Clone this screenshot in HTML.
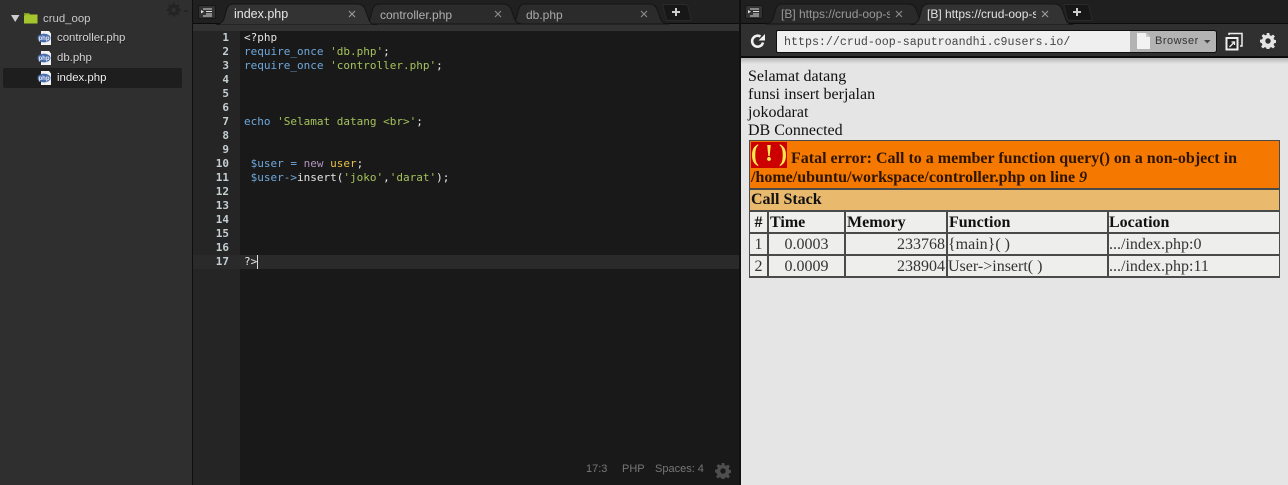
<!DOCTYPE html>
<html><head><meta charset="utf-8">
<style>
*{box-sizing:border-box}
html,body{margin:0;padding:0;width:1288px;height:485px;overflow:hidden;background:#1a1a1a}
.a{position:absolute}
.s{font-family:"Liberation Sans",sans-serif;white-space:nowrap}
.m{font-family:"DejaVu Sans Mono","Liberation Mono",monospace;white-space:pre}
.f{font-size:11.4px;color:#d5d5d5;left:57px;text-shadow:0 1px 0 #111;line-height:14px}
.fi{left:37px;width:16px;height:14px}
.ln{left:193px;width:36px;text-align:right;color:#c4ced3;font-size:11px;line-height:14px;font-weight:bold;height:14px}
.cd{left:244px;font-size:11px;line-height:14px;height:14px;color:#e6e6e6}
.b{color:#6fa8dc}.g{color:#a5c25c}.w{color:#e6e6e6}.p{color:#b294bb}.y{color:#e6c04a}
.pg{font-family:"Liberation Serif",serif;font-size:16px;line-height:18px;color:#111;white-space:nowrap}
.c{position:absolute;background:#eeeeec;font-family:"Liberation Serif",serif;font-size:16px;line-height:20px;color:#333;white-space:nowrap;padding:1px 1px 0}
.h{font-weight:bold;color:#111}
.r{text-align:right}
.ph{font-family:"Liberation Sans",sans-serif;font-size:6px;font-weight:bold;fill:#e6ecf8}
</style></head><body>

<!-- sidebar -->
<div class="a" style="left:0;top:0;width:193px;height:485px;background:#2f2f2f"></div>
<div class="a" style="left:192px;top:0;width:1px;height:485px;background:#0e0e0e"></div>
<svg class="a" style="left:165px;top:2px" width="24" height="16" viewBox="0 0 24 16"><path d="M8 1.500l1.500 0 .5 2 1.600.7 1.800-1 1 1-1 1.800.7 1.600 2 .5v1.500l-2 .5-.7 1.600 1 1.800-1 1-1.800-1-1.600.7-.5 1.600h-1.500l-.5-1.600-1.600-.7-1.800 1-1-1 1-1.800-.7-1.600-2-.5V8.100l2-.5.7-1.600-1-1.800 1-1 1.800 1 1.600-.7z" fill="#242424" transform="translate(0 -1)"/><circle cx="8.700" cy="8" r="2.200" fill="#2f2f2f"/><path d="M19 9h4" stroke="#222" stroke-width="1.500"/></svg>
<svg class="a" style="left:11px;top:15px" width="9" height="7"><path d="M0 0h8.500L4.200 7z" fill="#ccc"/></svg>
<svg class="a" style="left:24px;top:12px" width="14" height="12"><path d="M0 1h5l1 1.500h7.500V11.500H0z" fill="#a4c52e"/><path d="M0 1h5l1 1.500H2L0 4z" fill="#7f9a20"/></svg>
<div class="a s" style="left:43px;top:12px;font-size:11.4px;line-height:14px;color:#c8c8c8">crud_oop</div>
<div class="a" style="left:3px;top:68px;width:179px;height:20px;background:#1e1e1e;border-radius:2px"></div>
<svg class="a fi" style="top:31px" viewBox="0 0 16 14"><path d="M4 0h8l2 2.500V14H4z" fill="#f2f2f2"/><ellipse cx="7" cy="7" rx="6.500" ry="4.400" fill="#4a6cab"/><text class="ph" x="7" y="9" text-anchor="middle">php</text></svg>
<div class="a s f" style="top:31px">controller.php</div>
<svg class="a fi" style="top:51px" viewBox="0 0 16 14"><path d="M4 0h8l2 2.500V14H4z" fill="#f2f2f2"/><ellipse cx="7" cy="7" rx="6.500" ry="4.400" fill="#4a6cab"/><text class="ph" x="7" y="9" text-anchor="middle">php</text></svg>
<div class="a s f" style="top:51px">db.php</div>
<svg class="a fi" style="top:71px" viewBox="0 0 16 14"><path d="M4 0h8l2 2.500V14H4z" fill="#f2f2f2"/><ellipse cx="7" cy="7" rx="6.500" ry="4.400" fill="#4a6cab"/><text class="ph" x="7" y="9" text-anchor="middle">php</text></svg>
<div class="a s f" style="top:71px;color:#eee">index.php</div>

<!-- editor tab bar -->
<div class="a" style="left:193px;top:0;width:547px;height:24px;background:#202020;border-bottom:1px solid #0c0c0c"></div>
<div class="a" style="left:193px;top:24px;width:547px;height:7px;background:#323232"></div>
<div class="a" style="left:198px;top:5px;width:18px;height:14px;background:#333;border-radius:2px;border:1px solid #171717"></div>
<svg class="a" style="left:200px;top:7px" width="14" height="10"><path d="M3 2h9M6 4.500h6M6 7h6M3 9h9" stroke="#ddd" stroke-width="1"/><path d="M1 3l3 1.700-3 1.700z" fill="#ddd"/></svg>
<svg class="a" style="left:216px;top:2px" width="460" height="23">
<path d="M292 22q6 0 8-5l3-11q2-4 6-4h124q6 0 8 5l4 11q2 4 8 4z" fill="#2b2b2b" stroke="#141414"/>
<path d="M146 22q6 0 8-5l3-11q2-4 6-4h124q6 0 8 5l4 11q2 4 8 4z" fill="#2b2b2b" stroke="#141414"/>
<path d="M0 23q6-1 8-6l3-11q2-4 6-4h124q6 0 8 5l4 11q2 5 8 5z" fill="#333" stroke="#141414"/>
</svg>
<div class="a s" style="left:234px;top:7px;font-size:12.500px;line-height:14px;color:#e6e6e6">index.php</div>
<div class="a s" style="left:380px;top:8px;font-size:12px;line-height:14px;color:#b0b0b0">controller.php</div>
<div class="a s" style="left:526px;top:8px;font-size:12px;line-height:14px;color:#aaa">db.php</div>
<svg class="a" style="left:348px;top:10px" width="8" height="8"><path d="M1 1l6 6M7 1l-6 6" stroke="#999" stroke-width="1.200"/></svg>
<svg class="a" style="left:494px;top:10px" width="8" height="8"><path d="M1 1l6 6M7 1l-6 6" stroke="#8a8a8a" stroke-width="1.200"/></svg>
<svg class="a" style="left:640px;top:10px" width="8" height="8"><path d="M1 1l6 6M7 1l-6 6" stroke="#8a8a8a" stroke-width="1.200"/></svg>
<svg class="a" style="left:662px;top:4px" width="30" height="17"><path d="M1 .5h22q2 0 3 2l3 13q0 1-2 1H7q-2 0-3-2L1 2z" fill="#171717" stroke="#2a2a2a"/><path d="M10 8h8M14 4v8" stroke="#ccc" stroke-width="2"/></svg>

<!-- code -->
<div class="a" style="left:193px;top:31px;width:47px;height:454px;background:#252525"></div>
<div class="a" style="left:240px;top:31px;width:500px;height:454px;background:#191919"></div>
<div class="a" style="left:193px;top:255px;width:547px;height:14px;background:#2a2a2a"></div>
<div class="a m ln" style="top:31px">1</div>
<div class="a m ln" style="top:45px">2</div>
<div class="a m ln" style="top:59px">3</div>
<div class="a m ln" style="top:73px">4</div>
<div class="a m ln" style="top:87px">5</div>
<div class="a m ln" style="top:101px">6</div>
<div class="a m ln" style="top:115px">7</div>
<div class="a m ln" style="top:129px">8</div>
<div class="a m ln" style="top:143px">9</div>
<div class="a m ln" style="top:157px">10</div>
<div class="a m ln" style="top:171px">11</div>
<div class="a m ln" style="top:185px">12</div>
<div class="a m ln" style="top:199px">13</div>
<div class="a m ln" style="top:213px">14</div>
<div class="a m ln" style="top:227px">15</div>
<div class="a m ln" style="top:241px">16</div>
<div class="a m ln" style="top:255px">17</div>
<div class="a m cd" style="top:31px">&lt;?php</div>
<div class="a m cd" style="top:45px"><span class="b">require_once</span> <span class="g">'db.php'</span>;</div>
<div class="a m cd" style="top:59px"><span class="b">require_once</span> <span class="g">'controller.php'</span>;</div>
<div class="a m cd" style="top:115px"><span class="b">echo</span> <span class="g">'Selamat datang &lt;br&gt;'</span>;</div>
<div class="a m cd" style="top:157px"> <span class="b">$user</span> <span class="b">=</span> <span class="p">new</span> <span class="y">user</span>;</div>
<div class="a m cd" style="top:171px"> <span class="b">$user-&gt;</span>insert(<span class="g">'joko'</span>,<span class="g">'darat'</span>);</div>
<div class="a m cd" style="top:255px">?&gt;</div>
<div class="a" style="left:257px;top:255px;width:1px;height:14px;background:#ddd"></div>
<div class="a s" style="left:586px;top:462px;font-size:11px;line-height:14px;color:#777">17:3</div>
<div class="a s" style="left:622px;top:462px;font-size:11px;line-height:14px;color:#777">PHP</div>
<div class="a s" style="left:655px;top:462px;font-size:11px;line-height:14px;color:#777">Spaces: 4</div>
<svg class="a" style="left:715px;top:463px" width="16" height="16" viewBox="0 0 16 16"><path d="M6.700 0h2.600l.4 2.300 1.500.6 1.900-1.300 1.800 1.800-1.300 1.900.6 1.500 2.300.4v2.600l-2.300.4-.6 1.500 1.300 1.900-1.800 1.800-1.900-1.300-1.500.6-.4 2.300H6.700l-.4-2.300-1.500-.6-1.900 1.300-1.800-1.800 1.300-1.900-.6-1.500L0 9.300V6.700l2.300-.4.6-1.500L1.600 2.900l1.800-1.800 1.900 1.300 1.500-.6z" fill="#4e4e4e"/><circle cx="8" cy="8" r="2.700" fill="#191919"/></svg>

<!-- right pane -->
<div class="a" style="left:739px;top:0;width:2px;height:485px;background:#111"></div>
<div class="a" style="left:741px;top:0;width:547px;height:24px;background:#1f1f1f;border-bottom:1px solid #0c0c0c"></div>
<div class="a" style="left:741px;top:24px;width:547px;height:34px;background:#303030;border-bottom:2px solid #0c0c0c"></div>
<div class="a" style="left:745px;top:5px;width:18px;height:14px;background:#333;border-radius:2px;border:1px solid #171717"></div>
<svg class="a" style="left:747px;top:7px" width="14" height="10"><path d="M3 2h9M6 4.500h6M6 7h6M3 9h9" stroke="#ddd" stroke-width="1"/><path d="M1 3l3 1.700-3 1.700z" fill="#ddd"/></svg>
<svg class="a" style="left:765px;top:2px" width="310" height="23">
<path d="M0 22q6 0 8-5l3-11q2-4 6-4h126q6 0 8 5l4 11q2 4 8 4z" fill="#2a2a2a" stroke="#141414"/>
<path d="M146 23q6-1 8-6l3-11q2-4 6-4h126q6 0 8 5l4 11q2 5 8 5z" fill="#333" stroke="#141414"/>
</svg>
<div class="a s" style="left:781px;top:7px;width:109px;overflow:hidden;font-size:12px;line-height:14px;color:#999">[B] https://crud-oop-saputroandhi</div>
<div class="a s" style="left:927px;top:7px;width:109px;overflow:hidden;font-size:12px;line-height:14px;color:#e2e2e2">[B] https://crud-oop-saputroandhi</div>
<svg class="a" style="left:895px;top:10px" width="8" height="8"><path d="M1 1l6 6M7 1l-6 6" stroke="#8a8a8a" stroke-width="1.200"/></svg>
<svg class="a" style="left:1041px;top:10px" width="8" height="8"><path d="M1 1l6 6M7 1l-6 6" stroke="#999" stroke-width="1.200"/></svg>
<svg class="a" style="left:1063px;top:4px" width="30" height="17"><path d="M1 .5h22q2 0 3 2l3 13q0 1-2 1H7q-2 0-3-2L1 2z" fill="#171717" stroke="#2a2a2a"/><path d="M10 8h8M14 4v8" stroke="#ccc" stroke-width="2"/></svg>
<svg class="a" style="left:750px;top:33px" width="16" height="16" viewBox="0 0 16 16"><path d="M13 9.500A5.500 5.500 0 1 1 10.500 3.500" fill="none" stroke="#f0f0f0" stroke-width="2.600"/><path d="M8.500 7.500h6.500V1z" fill="#f0f0f0"/></svg>
<div class="a" style="left:776px;top:30px;width:361px;height:23px;background:#efefef;border:1px solid #0f0f0f;border-radius:2px"></div>
<div class="a" style="left:1130px;top:30px;width:87px;height:23px;background:#b3b3b3;border:1px solid #0f0f0f;border-left:none;border-radius:0 3px 3px 0"></div>
<div class="a" style="left:784px;top:36px;font-family:'Liberation Mono',monospace;font-size:11.650px;line-height:14px;color:#444;white-space:pre">https://crud-oop-saputroandhi.c9users.io/</div>
<svg class="a" style="left:1137px;top:33px" width="14" height="16"><path d="M0 0h9l4 4v12H0z" fill="#f2f2f2"/><path d="M9 0v4h4z" fill="#ccc"/></svg>
<div class="a s" style="left:1155px;top:34px;font-size:11px;line-height:14px;color:#333;letter-spacing:.5px">Browser</div>
<svg class="a" style="left:1204px;top:40px" width="7" height="4"><path d="M0 0h6.500L3.200 3.500z" fill="#444"/></svg>
<svg class="a" style="left:1225px;top:32px" width="19" height="19"><rect x="1.500" y="6" width="11" height="11.500" fill="#222" stroke="#eee" stroke-width="2"/><path d="M4 3V1.500h13V14h-2" fill="none" stroke="#eee" stroke-width="1.500"/><path d="M4.500 15l5-5M6.500 10h3v3" stroke="#eee" stroke-width="1.300" fill="none"/></svg>
<svg class="a" style="left:1260px;top:33px" width="16" height="16" viewBox="0 0 16 16"><path d="M6.700 0h2.600l.4 2.300 1.500.6 1.900-1.300 1.800 1.800-1.300 1.900.6 1.500 2.300.4v2.600l-2.300.4-.6 1.500 1.300 1.900-1.800 1.800-1.900-1.300-1.500.6-.4 2.300H6.700l-.4-2.300-1.500-.6-1.900 1.300-1.800-1.800 1.300-1.900-.6-1.500L0 9.300V6.700l2.300-.4.6-1.500L1.600 2.900l1.800-1.800 1.900 1.300 1.500-.6z" fill="#e4e4e4"/><circle cx="8" cy="8" r="2.700" fill="#303030"/></svg>

<!-- page -->
<div class="a" style="left:741px;top:58px;width:547px;height:427px;background:#e5e5e5"></div>
<div class="a" style="left:741px;top:58px;width:547px;height:6px;background:linear-gradient(#b5b5b5,#e5e5e5)"></div>
<div class="a pg" style="left:748px;top:68px">Selamat datang</div>
<div class="a pg" style="left:748px;top:86px">funsi insert berjalan</div>
<div class="a pg" style="left:748px;top:104px">jokodarat</div>
<div class="a pg" style="left:748px;top:122px">DB Connected</div>

<div class="a" style="left:749px;top:140px;width:531px;height:138px;background:#4a4a4a"></div>
<div class="c" style="left:750px;top:141px;width:529px;height:47px;background:#f57900;padding:0"></div>
<div class="a" style="left:751px;top:142px;width:36px;height:26px;background:#cc0000"></div>
<div class="a" style="left:751px;top:141px;width:36px;height:27px;font-family:'Liberation Serif',serif;font-size:24px;font-weight:bold;line-height:27px;color:#fce94f;text-align:center;white-space:pre">( ! )</div>
<div class="a" style="left:791px;top:150px;font-family:'Liberation Serif',serif;font-size:16px;font-weight:bold;line-height:18px;color:#2e1500;white-space:nowrap">Fatal error: Call to a member function query() on a non-object in</div>
<div class="a" style="left:751px;top:169px;font-family:'Liberation Serif',serif;font-size:16px;font-weight:bold;line-height:18px;color:#2e1500;white-space:nowrap">/home/ubuntu/workspace/controller.php on line <i>9</i></div>

<div class="c h" style="left:750px;top:190px;width:529px;height:20px;background:#e9b96e;padding-top:0">Call Stack</div>

<div class="c h" style="left:750px;top:212px;width:17px;height:20px;text-align:center">#</div>
<div class="c h" style="left:769px;top:212px;width:75px;height:20px">Time</div>
<div class="c h" style="left:846px;top:212px;width:100px;height:20px">Memory</div>
<div class="c h" style="left:948px;top:212px;width:159px;height:20px">Function</div>
<div class="c h" style="left:1109px;top:212px;width:170px;height:20px;padding-left:0">Location</div>

<div class="c" style="left:750px;top:234px;width:17px;height:20px;text-align:center">1</div>
<div class="c" style="left:769px;top:234px;width:75px;height:20px;text-align:center">0.0003</div>
<div class="c r" style="left:846px;top:234px;width:100px;height:20px">233768</div>
<div class="c" style="left:948px;top:234px;width:159px;height:20px;padding-left:0">{main}( )</div>
<div class="c" style="left:1109px;top:234px;width:170px;height:20px;padding-left:0">.../index.php:0</div>

<div class="c" style="left:750px;top:256px;width:17px;height:20px;text-align:center">2</div>
<div class="c" style="left:769px;top:256px;width:75px;height:20px;text-align:center">0.0009</div>
<div class="c r" style="left:846px;top:256px;width:100px;height:20px">238904</div>
<div class="c" style="left:948px;top:256px;width:159px;height:20px;padding-left:0">User-&gt;insert( )</div>
<div class="c" style="left:1109px;top:256px;width:170px;height:20px;padding-left:0">.../index.php:11</div>

</body></html>
